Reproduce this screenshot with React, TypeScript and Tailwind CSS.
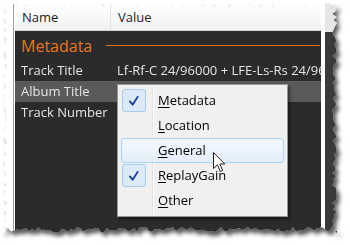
const W = 336;
const H = 231;

// jagged outline of the torn screenshot clipping
function tornEdge() {
  let s = 11;
  const r = () => {
    s = (s * 9301 + 49297) % 233280;
    return s / 233280;
  };
  const pts: string[] = [];
  for (let x = 0; x <= W; x += 3) pts.push(`${x}px ${1 + r() * 5}px`);
  for (let y = 0; y <= H; y += 3) pts.push(`${W - 1 - r() * 5}px ${y}px`);
  for (let x = W; x >= 0; x -= 3) pts.push(`${x}px ${H - 1 - r() * 5}px`);
  for (let y = H; y >= 0; y -= 3) pts.push(`${1 + r() * 4}px ${y}px`);
  return `polygon(${pts.join(",")})`;
}

const rows = [
  { name: "Track Title", value: "Lf-Rf-C 24/96000 + LFE-Ls-Rs 24/96000", selected: false },
  { name: "Album Title", value: "", selected: true },
  { name: "Track Number", value: "", selected: false },
];

const menuItems = [
  { key: "M", rest: "etadata", checked: true, hover: false },
  { key: "L", rest: "ocation", checked: false, hover: false },
  { key: "G", rest: "eneral", checked: false, hover: true },
  { key: "R", rest: "eplayGain", checked: true, hover: false },
  { key: "O", rest: "ther", checked: false, hover: false },
];

const Check = () => (
  <svg width="24" height="24" viewBox="0 0 24 24">
    <path d="M7.5 12.5 L10.5 16 L16 7.5" fill="none" stroke="#1b3a93" strokeWidth="2" strokeLinecap="round" strokeLinejoin="round" />
  </svg>
);

const App = () => {
  return (
    <div className="relative w-[350px] h-[245px] overflow-hidden bg-white pt-[2px] pl-[2px] font-['Open_Sans','Noto_Sans',sans-serif] text-[13px]">
      <div className="w-[336px] h-[231px] drop-shadow-[3px_4px_2px_rgba(0,0,0,0.65)]">
        <div className="flex w-full h-full bg-white" style={{ clipPath: tornEdge() }}>
          <div className="w-[11px] shrink-0" />
          <div className="w-px shrink-0 bg-[#a0a0a0]" />
          <div className="w-px shrink-0" />
          <div className="flex flex-col w-[306px] shrink-0">
            {/* header */}
            <div className="flex h-[29px] shrink-0 bg-gradient-to-b from-white to-[#f1f2f4] border-b border-[#d5d5d5] text-[#1e1e1e]">
              <div className="w-[95px] pl-[7px] pt-[4px] flex items-center">Name</div>
              <div className="w-px mt-[5px] bg-[#e2e3e5]" />
              <div className="pl-[7px] pt-[4px] flex items-center">Value</div>
            </div>
            {/* properties */}
            <div className="flex-1 bg-[#2b2b2b]">
              <div className="flex items-center h-[29px] pl-[6px] pr-px">
                <span className="text-[16px] text-[#e8791e]">Metadata</span>
                <div className="flex-1 h-px ml-[14px] bg-[#e07218]" />
              </div>
              {rows.map((row) => (
                <div
                  key={row.name}
                  className={`flex items-center h-[21px] text-[#e4e4e4] whitespace-nowrap overflow-hidden ${row.selected ? "bg-[#5a5a5a]" : ""}`}
                >
                  <div className="w-[102px] shrink-0 pl-[6px]">{row.name}</div>
                  <div>{row.value}</div>
                </div>
              ))}
            </div>
          </div>
          <div className="w-[4px] shrink-0" />
          <div className="flex flex-col w-[12px] shrink-0">
            <div className="h-[30px] bg-[#e6e6e6]" />
            <div className="flex-1 bg-[#3a3a3a]" />
          </div>
        </div>
      </div>

      {/* context menu */}
      <div className="absolute left-[117px] top-[84px] w-[171px] border border-[#979797] bg-[#f0f0f0] p-[3px] shadow-[2px_2px_3px_rgba(0,0,0,0.45)] text-black">
        <div className="absolute left-[34px] top-[2px] bottom-[2px] w-px bg-[#e2e3e3]" />
        <div className="absolute left-[35px] top-[2px] bottom-[2px] w-px bg-white" />
        {menuItems.map((item) => (
          <div
            key={item.key}
            className={`relative flex items-center h-[25px] rounded-[3px] border ${item.hover ? "border-[#a8d4f4] bg-gradient-to-b from-[#f3f8fd] to-[#e3eefb]" : "border-transparent"}`}
          >
            <div
              className={`w-[24px] h-[23px] rounded-[3px] border flex items-center justify-center ${item.checked ? "border-[#a9cbea] bg-[#dce9f8]" : "border-transparent"}`}
            >
              {item.checked ? <Check /> : null}
            </div>
            <span className="ml-[12px]">
              <span className="underline underline-offset-2">{item.key}</span>
              {item.rest}
            </span>
          </div>
        ))}
      </div>

      {/* mouse pointer */}
      <svg className="absolute left-[213px] top-[152px]" width="13" height="21" viewBox="0 0 13 21">
        <path d="M0.5 0.5 L0.5 16.5 L4.5 12.8 L7.3 19.5 L9.6 18.5 L6.9 12 L11.8 12 Z" fill="white" stroke="#222" strokeWidth="1" strokeLinejoin="round" />
      </svg>
    </div>
  );
};

export default App;
